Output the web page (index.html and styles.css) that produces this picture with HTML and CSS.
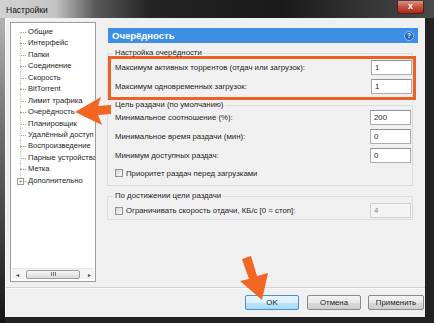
FILE: index.html
```html
<!DOCTYPE html>
<html lang="ru">
<head>
    <meta charset="UTF-8">
    <title>Настройки</title>
    <link rel="stylesheet" href="styles.css">
</head>
<body>
    <div class="window">
        <div class="titlebar">
            <span class="title">Настройки</span>
            <span class="close">x</span>
        </div>
        <div class="client">
            <div class="main">
                <div class="tree">
                    <ul class="tree-list">
                        <li>Общие</li>
                        <li>Интерфейс</li>
                        <li>Папки</li>
                        <li>Соединение</li>
                        <li>Скорость</li>
                        <li>BitTorrent</li>
                        <li>Лимит трафика</li>
                        <li>Очерёдность</li>
                        <li>Планировщик</li>
                        <li>Удалённый доступ</li>
                        <li>Воспроизведение</li>
                        <li>Парные устройства</li>
                        <li>Метка</li>
                        <li class="last"><span class="expander">+</span>Дополнительно</li>
                    </ul>
                    <div class="hscroll">
                        <span class="arrow">&#9666;</span>
                        <span class="thumb"><span class="grip"></span></span>
                        <span class="arrow">&#9656;</span>
                    </div>
                </div>
                <div class="content">
                    <div class="header">
                        <span>Очерёдность</span>
                        <span class="help">?</span>
                    </div>
                    <fieldset class="group">
                        <legend>Настройка очерёдности</legend>
                        <div class="marked">
                            <div class="row">
                                <span>Максимум активных торрентов (отдач или загрузок):</span>
                                <span class="field">1</span>
                            </div>
                            <div class="row">
                                <span>Максимум одновременных загрузок:</span>
                                <span class="field">1</span>
                            </div>
                        </div>
                    </fieldset>
                    <fieldset class="group">
                        <legend>Цель раздачи (по умолчанию)</legend>
                        <div class="row">
                            <span>Минимальное соотношение (%):</span>
                            <span class="field">200</span>
                        </div>
                        <div class="row">
                            <span>Минимальное время раздачи (мин):</span>
                            <span class="field">0</span>
                        </div>
                        <div class="row">
                            <span>Минимум доступных раздач:</span>
                            <span class="field">0</span>
                        </div>
                        <div class="check-row">
                            <span class="checkbox"></span>
                            <span>Приоритет раздач перед загрузками</span>
                        </div>
                    </fieldset>
                    <fieldset class="group last-group">
                        <legend>По достижении цели раздачи</legend>
                        <div class="row">
                            <span class="check-label"><span class="checkbox"></span>Ограничивать скорость отдачи, КБ/с [0 = стоп]:</span>
                            <span class="field disabled">4</span>
                        </div>
                    </fieldset>
                </div>
            </div>
            <div class="separator"></div>
            <div class="buttons">
                <span class="button default">OK</span>
                <span class="button">Отмена</span>
                <span class="button">Применить</span>
            </div>
        </div>
    </div>

    <!-- annotation arrows drawn over the dialog -->
    <svg class="pointer" width="434" height="323" viewBox="0 0 434 323">
        <polygon points="75,112 101,97 98,106 111,105 111,114 98,115 102,125" fill="#f26522"/>
        <polygon points="242,259 251,256 257,276 268,273 262,300 240,281 249,279" fill="#f26522"/>
    </svg>
</body>
</html>
```

FILE: styles.css
```css
body {
    margin: 0;
    width: 434px;
    height: 323px;
    overflow: hidden;
    position: relative;
    background: #1c1c1c;
    font-family: "Liberation Sans", Arial, sans-serif;
    font-size: 7.8px;
    color: #1e1e1e;
}
.window {
    width: 434px;
    height: 323px;
    display: flex;
    flex-direction: column;
    background: linear-gradient(#bdbdbd, #6f6f6f 40%, #151515) left top / 5px 100% no-repeat, #222;
}
.titlebar {
    height: 18px;
    display: flex;
    align-items: flex-start;
    justify-content: space-between;
    background: linear-gradient(to right, #d2d2d2 0, #c4c4c4 55px, #5a5a5a 95px, #242424 150px, #1a1a1a 280px, #3c3c3c 390px, #4a4a4a 434px);
}
.title {
    padding: 5px 0 0 6px;
    font-size: 8.5px;
    color: #111;
}
.close {
    width: 25px;
    height: 12px;
    margin: 1px 10px 0 0;
    border: 1px solid #5a1d1d;
    border-top: none;
    border-radius: 0 0 3px 3px;
    background: linear-gradient(#e09080, #c8503a 50%, #a92a1a);
    color: #fff;
    font-weight: bold;
    font-size: 9px;
    line-height: 11px;
    text-align: center;
}
.client {
    margin: 0 9px 6px 5px;
    flex: 1;
    display: flex;
    flex-direction: column;
    background: #f0f0f0;
    border-left: 1px solid #fafafa;
}
.main {
    display: flex;
    padding: 4px 0 0 4px;
}
.tree {
    width: 84px;
    height: 258px;
    border: 1px solid #9a9ea6;
    background: #fff;
    display: flex;
    flex-direction: column;
}
.tree-list {
    list-style: none;
    margin: 0;
    padding: 3px 0 0 0;
    flex: 1;
    font-size: 7.6px;
}
.tree-list li {
    position: relative;
    height: 11.45px;
    line-height: 11.45px;
    padding-left: 17px;
    white-space: nowrap;
    overflow: hidden;
}
.tree-list li::before {
    content: '';
    position: absolute;
    left: 9px;
    top: 6px;
    width: 6px;
    border-top: 1px dotted #9a9a9a;
}
.tree-list li::after {
    content: '';
    position: absolute;
    left: 9px;
    top: 0;
    bottom: 0;
    border-left: 1px dotted #c4c4c4;
}
.tree-list li:first-child::after {
    top: 6px;
}
.tree-list li.last::after {
    bottom: 6px;
}
.expander {
    position: absolute;
    left: 6px;
    top: 3px;
    width: 5px;
    height: 5px;
    border: 1px solid #9a9a9a;
    background: #fff;
    font-size: 6px;
    line-height: 5px;
    text-align: center;
    color: #555;
    z-index: 1;
}
.hscroll {
    height: 10px;
    margin: 0 1px 2px 1px;
    display: flex;
    align-items: center;
    justify-content: space-between;
    background: #f4f4f4;
    border-top: 1px solid #e6e6e6;
}
.hscroll .arrow {
    width: 10px;
    text-align: center;
    font-size: 6px;
    color: #444;
}
.thumb {
    flex: 1;
    height: 7px;
    margin: 0 4px;
    border: 1px solid #9c9c9c;
    border-radius: 2px;
    background: linear-gradient(#f6f6f6, #dadada);
    display: flex;
    align-items: center;
    justify-content: center;
}
.grip {
    width: 5px;
    height: 4px;
    background: repeating-linear-gradient(to right, #777 0 1px, transparent 1px 2px);
}
.content {
    width: 311px;
    margin-left: 11px;
}
.header {
    margin: 6px 0 0 1px;
    height: 15px;
    display: flex;
    align-items: center;
    justify-content: space-between;
    padding: 0 4px 0 4px;
    background: #3c8fe4;
    color: #fff;
    font-weight: bold;
    font-size: 9.5px;
}
.help {
    width: 8px;
    height: 8px;
    border-radius: 50%;
    border: 1px solid #8fbef0;
    background: #2665b8;
    font-size: 6.5px;
    line-height: 8px;
    text-align: center;
}
.group {
    margin: 0;
    padding: 0;
    border: 1px solid #dcdcdc;
    width: 306px;
    box-sizing: border-box;
}
.group legend {
    margin-left: 5px;
    padding: 0 2px;
    line-height: 10px;
    height: 10px;
}
.group:first-of-type {
    margin-top: 5px;
    border-bottom: none;
}
.group:nth-of-type(2) {
    padding-bottom: 6px;
}
.last-group {
    margin-top: 5px;
    padding: 2px 0 1px 0;
}
.marked {
    margin: -2px -4px 0 0;
    padding: 1px 0 3px 4px;
    border: 3px solid #e8622c;
}
.row {
    height: 15px;
    display: flex;
    align-items: center;
    justify-content: space-between;
    padding-left: 7px;
}
.group .row + .row,
.group .row + .check-row {
    margin-top: 4px;
}
.marked .row {
    padding-left: 0;
}
.field {
    width: 36px;
    height: 13px;
    margin-right: 1px;
    border: 1px solid #abadb3;
    border-top-color: #8e9196;
    background: #fff;
    padding-left: 3px;
    line-height: 13px;
}
.field.disabled {
    border-color: #cfd1d4;
    background: #f4f4f4;
    color: #8a8a8a;
}
.check-row {
    height: 12px;
    display: flex;
    align-items: center;
    padding-left: 7px;
}
.check-label {
    display: flex;
    align-items: center;
}
.checkbox {
    width: 6px;
    height: 6px;
    margin-right: 3px;
    border: 1px solid #8f8f8f;
    background: linear-gradient(135deg, #d9d9d9, #f7f7f7);
}
.separator {
    margin-top: 5px;
    height: 1px;
    background: #d2d2d2;
    border-bottom: 1px solid #fbfbfb;
}
.buttons {
    display: flex;
    justify-content: flex-end;
    gap: 8px;
    padding: 6px 1px 0 0;
}
.button {
    width: 52px;
    height: 13px;
    line-height: 13px;
    text-align: center;
    border: 1px solid #8a8a8a;
    border-radius: 2px;
    background: linear-gradient(#f4f4f4, #e8e8e8 50%, #d8d8d8 51%, #cfcfcf);
}
.button:last-child {
    width: 54px;
    margin-left: -1px;
}
.button.default {
    border-color: #4f8fc7;
    background: linear-gradient(#eaf6fd, #d9f0fc 50%, #bee6fd 51%, #a7d9f5);
}
.pointer {
    position: absolute;
    left: 0;
    top: 0;
}
```
